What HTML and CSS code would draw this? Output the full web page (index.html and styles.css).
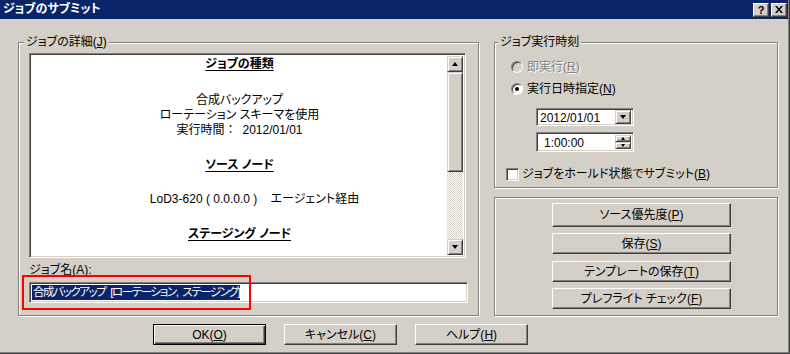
FILE: index.html
```html
<!DOCTYPE html>
<html lang="ja">
<head>
    <meta charset="UTF-8">
    <title>ジョブのサブミット</title>
    <link rel="stylesheet" href="styles.css">
</head>
<body>
    <div class="dialog">
        <div class="titlebar">
            <span class="title">ジョブのサブミット</span>
            <div class="tb-btns">
                <span class="tb-btn help">?</span>
                <span class="tb-btn close">
                    <svg width="8" height="7" viewBox="0 0 8 7"><path d="M0 0h2l2 2.5L6 0h2L5 3.5 8 7H6L4 4.5 2 7H0l3-3.5z" fill="#000"/></svg>
                </span>
            </div>
        </div>

        <div class="main">
            <fieldset class="group detail">
                <legend>ジョブの詳細(<u>J</u>)</legend>
                <div class="textbox">
                    <div class="report">
                        <h3>ジョブの種類</h3>
                        <p>合成バックアップ<br>ローテーション スキーマを使用<br>実行時間<span class="full">：</span>2012/01/01</p>
                        <h3>ソース ノード</h3>
                        <p class="agent">LoD3-620 ( 0.0.0.0 )&nbsp;&nbsp;&nbsp;&nbsp;エージェント経由</p>
                        <h3>ステージング ノード</h3>
                    </div>
                    <div class="vscroll">
                        <span class="sbtn"><i class="tri up"></i></span>
                        <span class="thumb"></span>
                        <span class="track"></span>
                        <span class="sbtn"><i class="tri down"></i></span>
                    </div>
                </div>
                <div class="label">ジョブ名(<u>A</u>):</div>
                <div class="namebox">
                    <div class="input"><span class="sel">合成バックアップ [ローテーション, ステージング]</span></div>
                    <div class="mark"></div>
                </div>
            </fieldset>

            <div class="side">
                <fieldset class="group schedule">
                    <legend>ジョブ実行時刻</legend>
                    <div class="opt disabled"><span class="radio"></span><span>即実行(<u>R</u>)</span></div>
                    <div class="opt"><span class="radio on"></span><span>実行日時指定(<u>N</u>)</span></div>
                    <div class="combo">
                        <span class="field">2012/01/01</span>
                        <span class="drop"><i class="tri down"></i></span>
                    </div>
                    <div class="spin">
                        <span class="field">1:00:00</span>
                        <span class="arrows">
                            <span class="half"><i class="tri up small"></i></span>
                            <span class="half"><i class="tri down small"></i></span>
                        </span>
                    </div>
                    <div class="opt hold"><span class="check"></span><span>ジョブをホールド状態でサブミット(<u>B</u>)</span></div>
                </fieldset>

                <div class="group actions">
                    <button class="btn first">ソース優先度(<u>P</u>)</button>
                    <button class="btn">保存(<u>S</u>)</button>
                    <button class="btn gap7">テンプレートの保存(<u>T</u>)</button>
                    <button class="btn">プレフライト チェック(<u>F</u>)</button>
                </div>
            </div>
        </div>

        <div class="footer">
            <button class="btn default">OK(<u>O</u>)</button>
            <button class="btn">キャンセル(<u>C</u>)</button>
            <button class="btn">ヘルプ(<u>H</u>)</button>
        </div>
    </div>
</body>
</html>
```

FILE: styles.css
```css
* { margin: 0; padding: 0; box-sizing: border-box; }
body { background: #d4d0c8; font: 12px "Liberation Sans", "Noto Sans CJK JP", sans-serif; color: #000; font-feature-settings: "palt"; }
u { text-decoration: underline; text-underline-offset: 1px; }

.dialog { width: 790px; height: 354px; background: #d4d0c8; box-shadow: inset -1px -1px #404040, inset -2px -2px #808080; display: flex; flex-direction: column; }

/* title bar */
.titlebar { height: 19px; margin-right: 2px; background: #0a246a; color: #fff; display: flex; align-items: center; justify-content: space-between; padding-left: 3px; }
.title { font-weight: bold; font-size: 12px; line-height: 19px; }
.tb-btns { display: flex; gap: 2px; padding-right: 1px; }
.tb-btn { width: 16px; height: 14px; background: #d4d0c8; color: #000; border: 1px solid; border-color: #fff #404040 #404040 #fff; box-shadow: inset -1px -1px #808080; display: flex; align-items: center; justify-content: center; font: bold 11px "Liberation Sans", sans-serif; }

/* layout */
.main { display: flex; padding: 17px 0 0 18px; }
.side { display: flex; flex-direction: column; margin-left: 15px; }

.group { border: 1px solid #808080; box-shadow: inset 1px 1px #fff, 1px 1px #fff; }
fieldset.group { padding: 0; }
legend { background: #d4d0c8; line-height: 12px; height: 12px; padding: 0 2px; font-size: 12px; }

.detail { width: 461px; height: 280px; padding: 5px 0 0 10px !important; }
.detail legend { margin-left: -5px; }

/* text box */
.textbox { width: 437px; height: 205px; display: flex; background: #fff; border: 1px solid; border-color: #808080 #fff #fff #808080; box-shadow: inset 1px 1px #404040, inset -1px -1px #d4d0c8; padding: 2px 2px 2px 2px; }
.report { flex: 1; text-align: center; line-height: 15px; }
.report h3 { font-size: 12px; font-weight: bold; line-height: 16px; text-decoration: underline; text-underline-offset: 2px; margin-top: 19px; }
.report h3:first-child { margin-top: 0; }
.report p { margin-top: 21px; }
.report .full { font-feature-settings: normal; padding-right: 6px; }
.report .agent { margin-top: 19px; padding-left: 30px; }

.vscroll { width: 16px; display: flex; flex-direction: column; }
.sbtn { width: 16px; height: 16px; background: #d4d0c8; border: 1px solid; border-color: #d4d0c8 #404040 #404040 #d4d0c8; box-shadow: inset 1px 1px #fff, inset -1px -1px #808080; display: flex; align-items: center; justify-content: center; }
.thumb { height: 100px; background: #d4d0c8; border: 1px solid; border-color: #d4d0c8 #404040 #404040 #d4d0c8; box-shadow: inset 1px 1px #fff, inset -1px -1px #808080; }
.track { flex: 1; background-color: #fff; background-image: conic-gradient(#d4d0c8 25%, #fff 0 50%, #d4d0c8 0 75%, #fff 0); background-size: 2px 2px; }

.tri { width: 0; height: 0; border-left: 3.5px solid transparent; border-right: 3.5px solid transparent; }
.tri.up { border-bottom: 4px solid #000; }
.tri.down { border-top: 4px solid #000; }
.tri.small { border-left-width: 2.5px; border-right-width: 2.5px; }
.tri.small.up { border-bottom-width: 3px; }
.tri.small.down { border-top-width: 3px; }

.label { margin-top: 4px; line-height: 16px; }
.namebox { position: relative; margin-top: 4px; width: 439px; }
.input { height: 21px; background: #fff; border: 1px solid; border-color: #808080 #fff #fff #808080; box-shadow: inset 1px 1px #404040, inset -1px -1px #d4d0c8; padding: 2px 0 0 2px; line-height: 15px; white-space: nowrap; }
.sel { background: #0a246a; color: #fff; display: inline-block; padding: 0 1px; font-size: 11.5px; letter-spacing: -1.4px; word-spacing: 3px; }
.mark { position: absolute; left: -7px; top: -7px; width: 229px; height: 35px; border: 2px solid #f00; }

/* schedule */
.schedule { width: 284px; height: 152px; padding: 11px 0 0 16px !important; }
.schedule legend { margin-left: -13px; }
.opt { display: flex; align-items: center; line-height: 16px; gap: 4px; }
.opt + .opt { margin-top: 6px; }
.disabled { color: #808080; text-shadow: 1px 1px #fff; }
.radio { width: 12px; height: 12px; border-radius: 50%; background: #fff; border: 1px solid; border-color: #808080 #fff #fff #808080; box-shadow: inset 1px 1px #404040; display: flex; align-items: center; justify-content: center; }
.disabled .radio { background: #d4d0c8; }
.radio.on::after { content: ""; width: 4px; height: 4px; border-radius: 50%; background: #000; }

.combo, .spin { width: 98px; margin-left: 25px; display: flex; background: #fff; border: 1px solid; border-color: #808080 #fff #fff #808080; box-shadow: inset 1px 1px #404040, inset -1px -1px #d4d0c8; padding: 2px; }
.combo { height: 18px; margin-top: 11px; }
.spin { height: 20px; margin-top: 6px; }
.field { flex: 1; line-height: 14px; padding-left: 1px; }
.spin .field { padding-left: 5px; line-height: 16px; }
.drop { width: 16px; background: #d4d0c8; border: 1px solid; border-color: #d4d0c8 #404040 #404040 #d4d0c8; box-shadow: inset 1px 1px #fff, inset -1px -1px #808080; display: flex; align-items: center; justify-content: center; margin: -1px 0; }
.arrows { width: 16px; display: flex; flex-direction: column; }
.half { flex: 1; background: #d4d0c8; border: 1px solid; border-color: #d4d0c8 #404040 #404040 #d4d0c8; box-shadow: inset 1px 1px #fff, inset -1px -1px #808080; display: flex; align-items: center; justify-content: center; }

.hold { margin-top: 14px !important; margin-left: -5px; gap: 3px; }
.check { width: 13px; height: 13px; background: #fff; border: 1px solid; border-color: #808080 #fff #fff #808080; box-shadow: inset 1px 1px #404040, inset -1px -1px #d4d0c8; }

/* buttons */
.btn { font: inherit; color: #000; background: #d4d0c8; border: 1px solid; border-color: #fff #404040 #404040 #fff; box-shadow: inset -1px -1px #808080; display: flex; align-items: center; justify-content: center; line-height: 14px; }
.btn.default { border-color: #000; box-shadow: inset 1px 1px #fff, inset -1px -1px #404040, inset -2px -2px #808080; }

.actions { width: 284px; height: 119px; margin-top: 9px; padding: 5px 0 0 57px; display: flex; flex-direction: column; }
.actions .btn { width: 179px; height: 21px; margin-top: 6px; }
.actions .btn.first { height: 24px; margin-top: 0; }
.actions .btn.gap7 { margin-top: 7px; }

.footer { display: flex; gap: 18px; padding: 8px 0 0 153px; }
.footer .btn { width: 113px; height: 21px; }
```
